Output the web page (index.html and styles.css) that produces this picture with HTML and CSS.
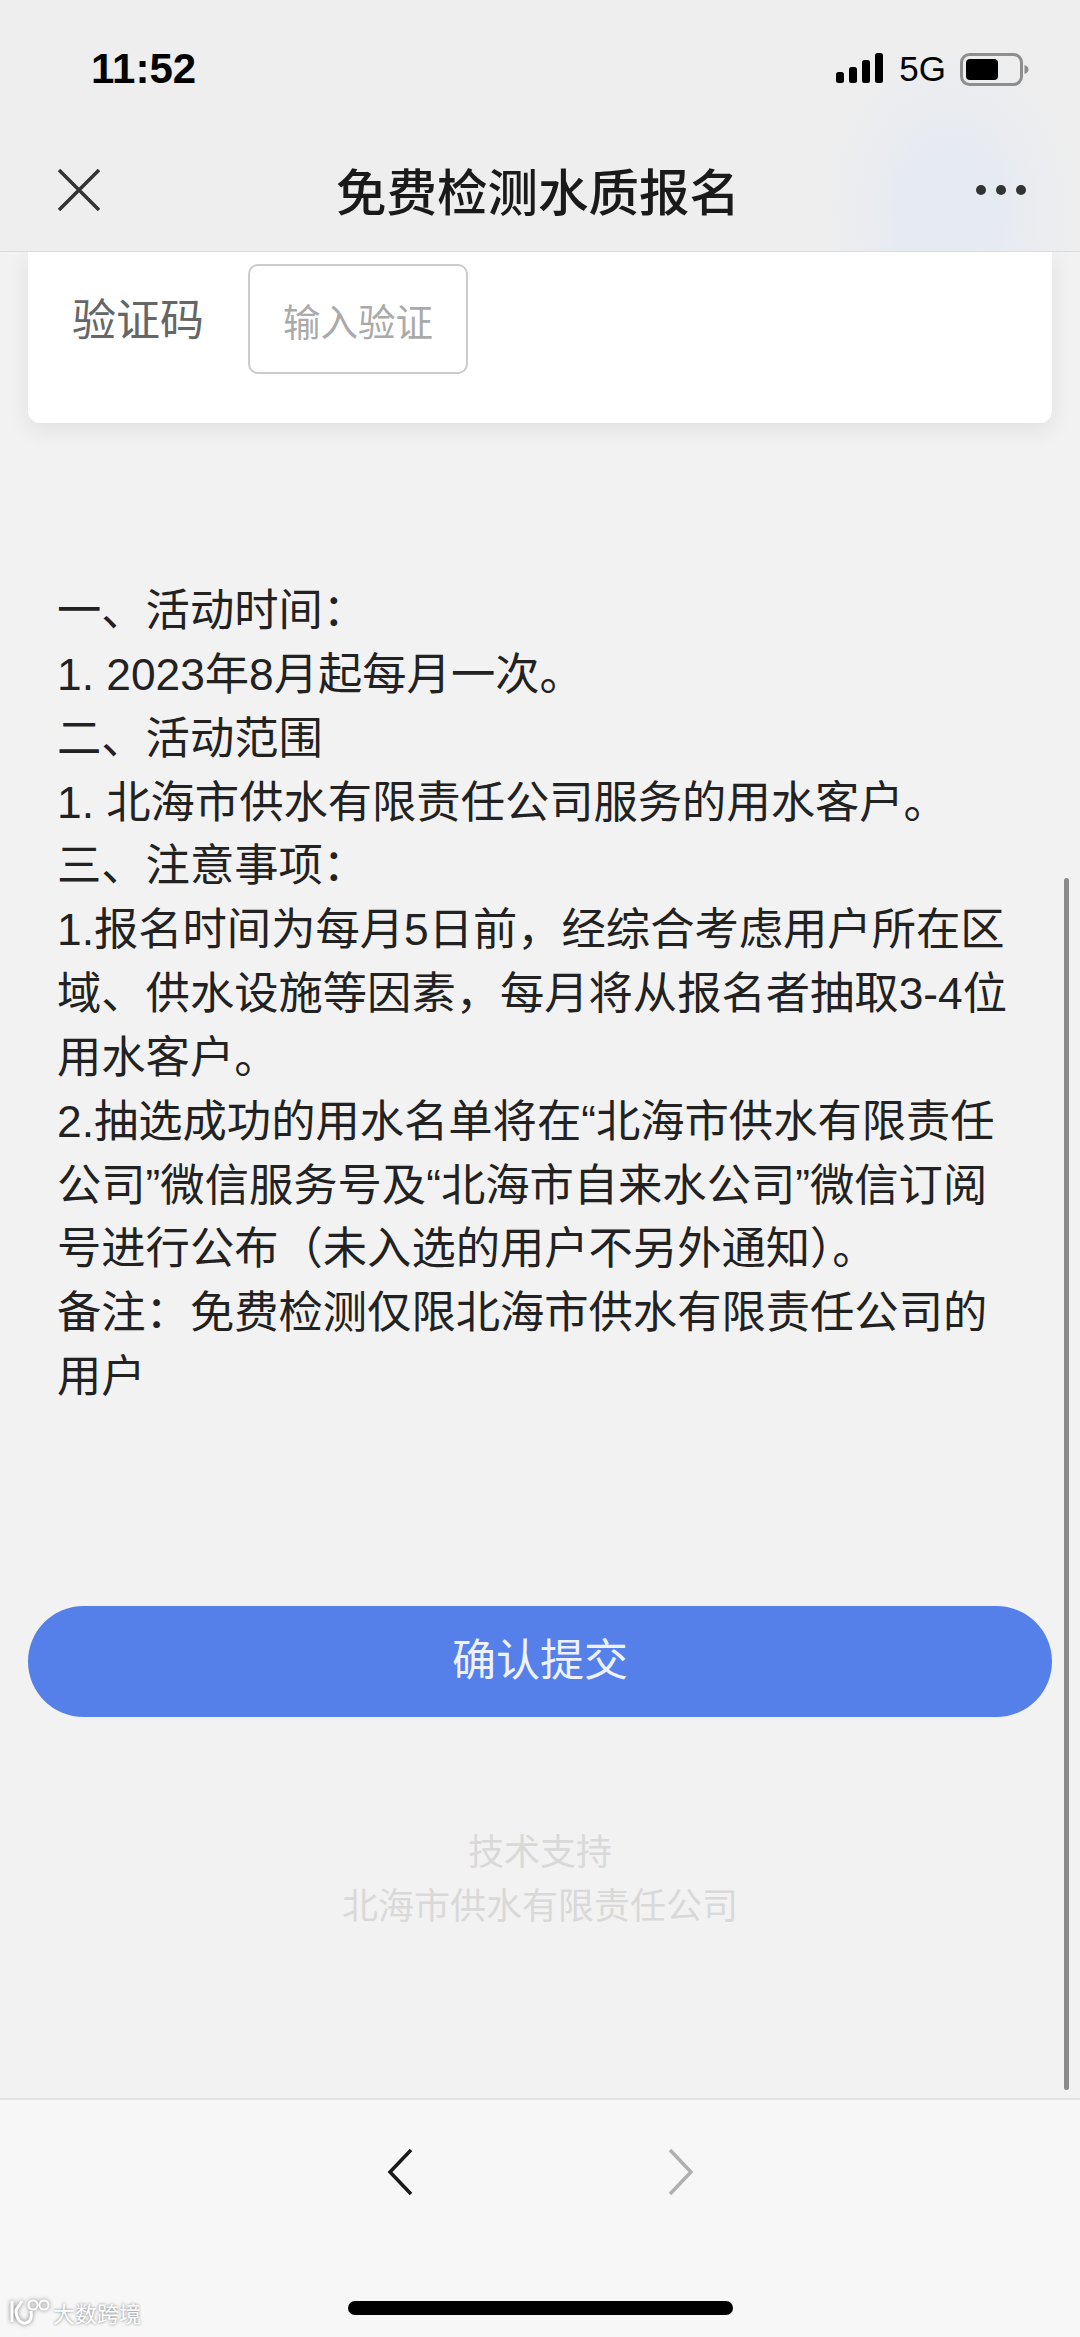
FILE: index.html
```html
<!DOCTYPE html>
<html lang="zh-CN">
    <head>
        <title>免费检测水质报名</title>
        <meta charset="utf-8" />
        <meta name="viewport" content="width=device-width, initial-scale=1.0" />
        <link rel="stylesheet" href="styles.css">
    </head>
    <body>

        <header>
            <div id="status">
                <span id="time">11:52</span>
                <span id="indicators">
                    <svg class="signal" width="47" height="30" viewBox="0 0 47 30">
                        <rect x="0" y="19" width="8" height="11" rx="2.5" />
                        <rect x="13" y="14" width="8" height="16" rx="2.5" />
                        <rect x="26" y="7" width="8" height="23" rx="2.5" />
                        <rect x="39" y="0" width="8" height="30" rx="2.5" />
                    </svg>
                    <span id="network">5G</span>
                    <svg class="battery" width="69" height="33" viewBox="0 0 69 33">
                        <rect x="1.5" y="1.5" width="60" height="30" rx="8" fill="none" stroke="#8e8e8e" stroke-width="3" />
                        <rect x="6" y="6" width="32" height="21" rx="4" fill="#000" />
                        <path d="M64.500 12c2.500 .8 4 2.500 4 4.500s-1.500 3.700-4 4.500z" fill="#8e8e8e" />
                    </svg>
                </span>
            </div>
            <div id="nav">
                <svg class="close" width="42" height="42" viewBox="0 0 42 42">
                    <path d="M1 1L41 41M41 1L1 41" fill="none" stroke="#333" stroke-width="3.500" />
                </svg>
                <h1>免费检测水质报名</h1>
                <span id="more"><i></i><i></i><i></i></span>
            </div>
        </header>

        <main>
            <section class="card">
                <label class="field-name">验证码</label>
                <div class="field-input">输入验证</div>
            </section>

            <article>
                <p>一、活动时间：</p>
                <p>1. 2023年8月起每月一次。</p>
                <p>二、活动范围</p>
                <p>1. 北海市供水有限责任公司服务的用水客户。</p>
                <p>三、注意事项：</p>
                <p>1.报名时间为每月5日前，经综合考虑用户所在区域、供水设施等因素，每月将从报名者抽取3-4位用水客户。</p>
                <p>2.抽选成功的用水名单将在“北海市供水有限责任公司”微信服务号及“北海市自来水公司”微信订阅号进行公布（未入选的用户不另外通知）。</p>
                <p>备注：免费检测仅限北海市供水有限责任公司的用户</p>
            </article>

            <button id="submit">确认提交</button>

            <footer>
                <div>技术支持</div>
                <div>北海市供水有限责任公司</div>
            </footer>

            <div id="scrollbar"></div>
        </main>

        <nav id="toolbar">
            <svg width="26" height="48" viewBox="0 0 26 48">
                <path d="M24 2L3 24L24 46" fill="none" stroke="#1a1a1a" stroke-width="3.500" />
            </svg>
            <svg width="26" height="48" viewBox="0 0 26 48">
                <path d="M2 2L23 24L2 46" fill="none" stroke="#b0b0b0" stroke-width="3.500" />
            </svg>
            <div id="home"></div>
            <div id="watermark">
                <svg width="42" height="28" viewBox="0 0 42 28">
                    <path d="M3 3V24M13 3L7 12C7 21 12 26 17 25C22 24 23 19 22 13" fill="none" stroke="#fff" stroke-width="3" />
                    <circle cx="24" cy="7" r="4.500" fill="none" stroke="#fff" stroke-width="2" />
                    <circle cx="35" cy="7" r="4.500" fill="none" stroke="#fff" stroke-width="2" />
                </svg>
                <span>大数跨境</span>
            </div>
        </nav>

    </body>
</html>
```

FILE: styles.css
```css
html, body {
    width: 1080px;
    height: 2337px;
    margin: 0;
    padding: 0;
    overflow: hidden;
}
body {
    display: flex;
    flex-direction: column;
    background-color: #f2f2f2;
    color: #222;
    font-family: "Liberation Sans", "Noto Sans CJK SC", sans-serif;
    font-size: 44px;
}
header {
    position: relative;
    z-index: 1;
    flex: 0 0 auto;
    height: 251px;
    border-bottom: 1px solid #dcdcdc;
    background-color: #eee;
    background-image: radial-gradient(ellipse 130px 170px at 950px 210px, #e6eaf1 35%, #eee 100%);
}
#status {
    display: flex;
    justify-content: space-between;
    align-items: center;
    height: 68px;
    padding: 35px 51px 0 91px;
    color: #000;
}
#time {
    font-size: 42px;
    font-weight: 700;
}
#indicators {
    display: flex;
    align-items: center;
}
#network {
    margin: 0 14px 0 16px;
    font-size: 35px;
}
.signal {
    fill: #000;
    margin-bottom: 2px;
}
#nav {
    display: flex;
    justify-content: space-between;
    align-items: center;
    height: 80px;
    margin-top: 47px;
    padding: 0 54px 0 58px;
}
h1 {
    margin: 0;
    padding-bottom: 2px;
    color: #1a1a1a;
    font-size: 50.500px;
    font-weight: 500;
}
#more {
    display: flex;
    gap: 10px;
}
#more i {
    display: block;
    width: 10px;
    height: 10px;
    border-radius: 50%;
    background-color: #333;
}
main {
    position: relative;
    flex: 1 1 auto;
}
.card {
    display: flex;
    align-items: center;
    height: 110px;
    margin: 0 28px;
    padding: 12px 0 49px 44px;
    border-radius: 0 0 12px 12px;
    background-color: #fff;
    box-shadow: 0 6px 24px rgba(0, 0, 0, 0.08);
}
.field-name {
    width: 176px;
    padding-bottom: 4px;
    color: #666;
    font-size: 44px;
}
.field-input {
    display: flex;
    justify-content: center;
    align-items: center;
    box-sizing: border-box;
    width: 220px;
    height: 110px;
    border: 2px solid #ccc;
    border-radius: 10px;
    color: #aaa;
    font-size: 37.500px;
}
article {
    width: 960px;
    margin: 156px 0 0 57px;
    font-size: 44.300px;
    line-height: 63.850px;
}
article p {
    margin: 0;
}
#submit {
    display: block;
    width: 1024px;
    height: 111px;
    margin: 197px 0 0 28px;
    padding: 0 0 8px;
    border: none;
    border-radius: 56px;
    background-color: #5680e9;
    color: #eef2ff;
    font-family: inherit;
    font-size: 44px;
}
footer {
    margin-top: 109px;
    color: #d9d9d9;
    font-size: 36px;
    line-height: 54px;
    text-align: center;
}
#scrollbar {
    position: absolute;
    top: 626px;
    right: 11px;
    width: 5px;
    height: 1212px;
    border-radius: 3px;
    background-color: #8a8a8a;
}
#toolbar {
    position: relative;
    flex: 0 0 auto;
    display: flex;
    justify-content: center;
    gap: 255px;
    height: 239px;
    padding-top: 48px;
    box-sizing: border-box;
    border-top: 2px solid #e2e2e2;
    background-color: #f7f7f7;
}
#home {
    position: absolute;
    left: 348px;
    bottom: 22px;
    width: 385px;
    height: 14px;
    border-radius: 7px;
    background-color: #000;
}
#watermark {
    position: absolute;
    left: 9px;
    bottom: 9px;
    display: flex;
    align-items: center;
    gap: 2px;
    color: #fff;
    font-size: 22px;
    text-shadow: 0 0 3px #777;
}
#watermark svg {
    filter: drop-shadow(0 0 2px #777);
}
```
